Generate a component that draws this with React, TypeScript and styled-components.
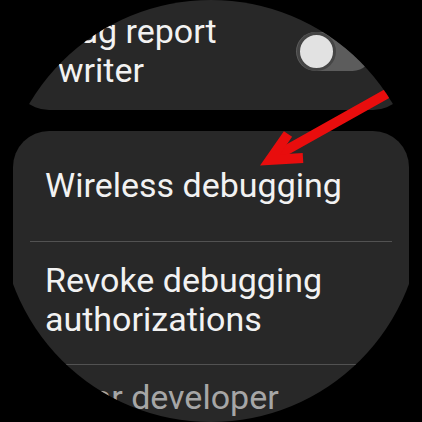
import React from "react";
import styled, { createGlobalStyle } from "styled-components";

const GlobalStyle = createGlobalStyle`
  html, body {
    margin: 0;
    padding: 0;
    background: #000;
  }
  body {
    font-family: Roboto, "Noto Sans", sans-serif;
  }
`;

const Watch = styled.div`
  position: relative;
  width: 422px;
  height: 422px;
  border-radius: 50%;
  overflow: hidden;
  background: #000;
`;

const List = styled.div`
  display: flex;
  flex-direction: column;
  gap: 21px;
  padding: 0 13px;
  margin-top: -8px;
`;

const Card = styled.div`
  background: #282828;
  border-radius: 36px;
`;

const ToggleCard = styled(Card)`
  display: flex;
  align-items: center;
  min-height: 118px;
  padding: 0 37px 0 45px;
  box-sizing: border-box;
`;

const Label = styled.div<{ $dim?: boolean }>`
  flex: 1;
  font-size: 34px;
  line-height: 39px;
  color: ${(p) => (p.$dim ? "#a6a6a6" : "#f2f2f2")};
`;

const Track = styled.div`
  width: 76px;
  height: 39px;
  border-radius: 20px;
  background: #5c5c5c;
  display: flex;
  align-items: center;
  padding-left: 1px;
  box-sizing: border-box;
`;

const Thumb = styled.div`
  width: 33px;
  height: 33px;
  border-radius: 50%;
  background: #e2e2e2;
  border: 3px solid #454545;
`;

const Row = styled.div<{ $top: number; $bottom: number; $divider?: boolean }>`
  margin: 0 17px;
  padding: ${(p) => `${p.$top}px 0 ${p.$bottom}px 15px`};
  border-top: ${(p) => (p.$divider ? "1px solid #525252" : "none")};
  font-size: 34px;
  line-height: 40px;
`;

const Arrow = styled.svg`
  position: absolute;
  left: 0;
  top: 0;
  pointer-events: none;
`;

export default function App() {
  return (
    <>
      <GlobalStyle />
      <Watch>
        <List>
          <ToggleCard>
            <Label>
              Bug report
              <br />
              writer
            </Label>
            <Track>
              <Thumb />
            </Track>
          </ToggleCard>
          <Card>
            <Row $top={35} $bottom={36}>
              <Label>Wireless debugging</Label>
            </Row>
            <Row $top={19} $bottom={25} $divider>
              <Label>
                Revoke debugging
                <br />
                authorizations
              </Label>
            </Row>
            <Row $top={13} $bottom={30} $divider>
              <Label $dim>
                Wear developer
                <br />
                options
              </Label>
            </Row>
          </Card>
        </List>
        <Arrow width="422" height="422" viewBox="0 0 422 422">
          <g stroke="#e80d0d" fill="none" strokeWidth="10">
            <path d="M406 83 L274 157" strokeLinecap="round" />
            <path d="M288 134 L270 160 L303 158" strokeLinejoin="miter" strokeLinecap="butt" />
          </g>
        </Arrow>
      </Watch>
    </>
  );
}
